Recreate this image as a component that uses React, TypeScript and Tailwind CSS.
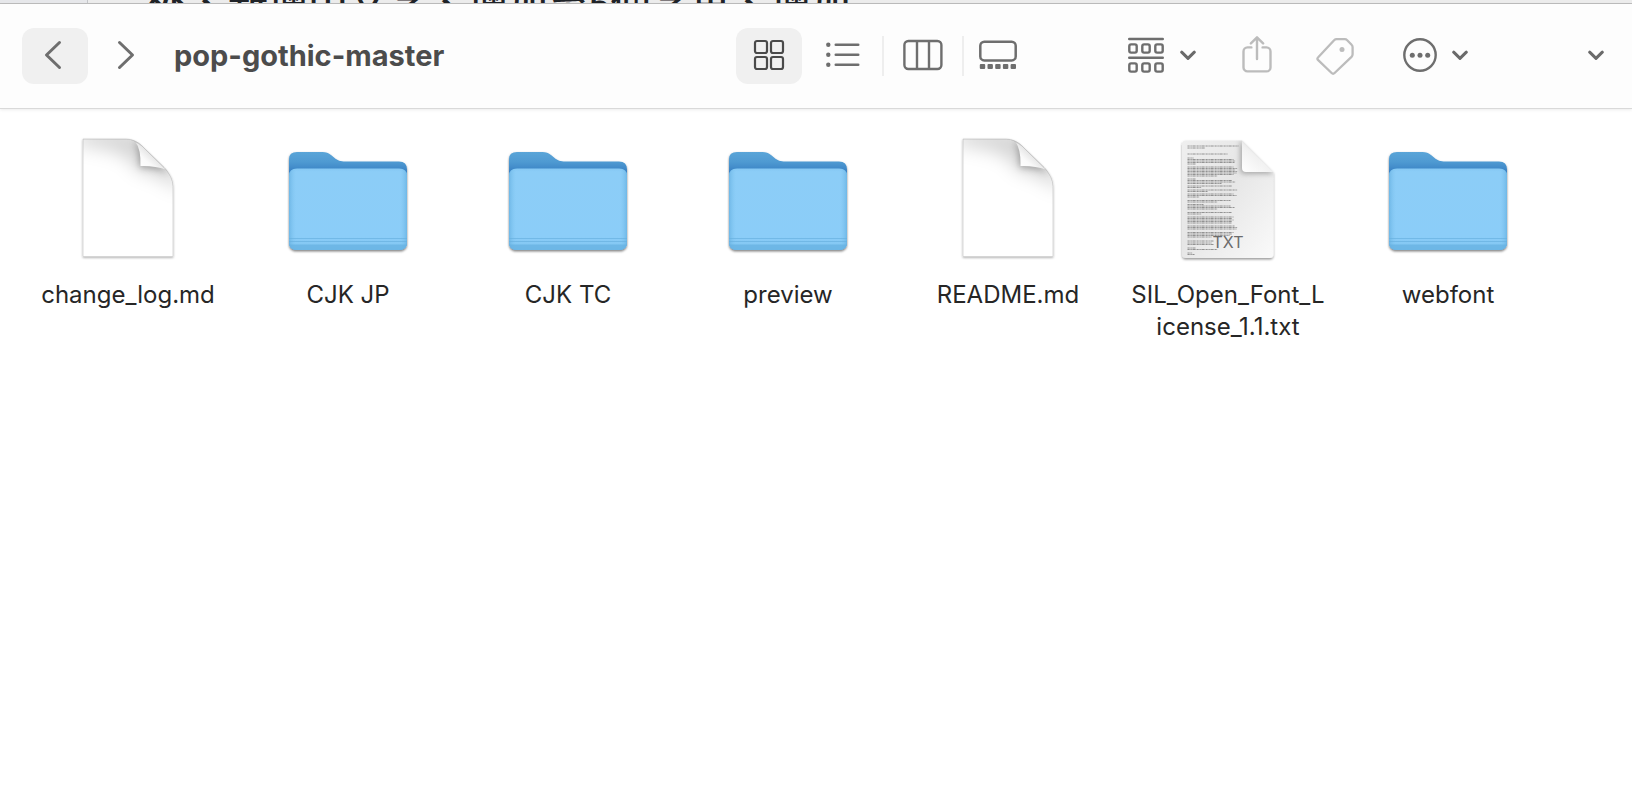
import React from "react";

type IconProps = { className?: string };

const ChevronLeft = () => (
  <svg width="18" height="30" viewBox="0 0 18 30" fill="none" stroke="#6e6e6e" strokeWidth="3" strokeLinecap="round" strokeLinejoin="round" aria-hidden="true">
    <path d="M15.5 2.5 2.500 15l13 12.500" />
  </svg>
);

const ChevronRight = () => (
  <svg width="18" height="30" viewBox="0 0 18 30" fill="none" stroke="#6e6e6e" strokeWidth="3" strokeLinecap="round" strokeLinejoin="round" aria-hidden="true">
    <path d="M2.5 2.5l13 12.5-13 12.5" />
  </svg>
);

const ChevronDown = ({ className }: IconProps) => (
  <svg className={className} width="16" height="12" viewBox="0 0 16 12" fill="none" stroke="#6a6a6a" strokeWidth="3" strokeLinecap="round" strokeLinejoin="round" aria-hidden="true">
    <path d="M1.7 3.2 8 9.300l6.300-6.100" />
  </svg>
);

const GridIcon = () => (
  <svg width="32" height="32" viewBox="0 0 32 32" fill="none" stroke="#4a4a4a" strokeWidth="2.2" aria-hidden="true">
    <rect x="2" y="2" width="12" height="12" rx="2" />
    <rect x="18" y="2" width="12" height="12" rx="2" />
    <rect x="2" y="18" width="12" height="12" rx="2" />
    <rect x="18" y="18" width="12" height="12" rx="2" />
  </svg>
);

const ListIcon = () => (
  <svg width="34" height="26" viewBox="0 0 34 26" fill="#6e6e6e" aria-hidden="true">
    <circle cx="2.3" cy="2.8" r="2.2" />
    <circle cx="2.3" cy="12.8" r="2.2" />
    <circle cx="2.3" cy="22.8" r="2.2" />
    <rect x="8.5" y="1.5" width="25" height="2.6" rx="1.3" />
    <rect x="8.5" y="11.5" width="25" height="2.6" rx="1.3" />
    <rect x="8.5" y="21.5" width="25" height="2.6" rx="1.3" />
  </svg>
);

const ColumnsIcon = () => (
  <svg width="40" height="32" viewBox="0 0 40 32" fill="none" stroke="#6e6e6e" strokeWidth="2.4" aria-hidden="true">
    <rect x="1.4" y="2" width="37" height="28" rx="4" />
    <path d="M14 2v28M26 2v28" />
  </svg>
);

const GalleryIcon = () => (
  <svg width="38" height="30" viewBox="0 0 38 30" aria-hidden="true">
    <rect x="1.3" y="1.8" width="35.4" height="18.6" rx="4" fill="none" stroke="#6e6e6e" strokeWidth="2.5" />
    <g fill="#6e6e6e">
      <rect x="0.8" y="24" width="5.4" height="5" rx="1" />
      <rect x="8.5" y="24" width="5.4" height="5" rx="1" />
      <rect x="16.2" y="24" width="5.4" height="5" rx="1" />
      <rect x="23.9" y="24" width="5.4" height="5" rx="1" />
      <rect x="31.6" y="24" width="5.4" height="5" rx="1" />
    </g>
  </svg>
);

const GroupIcon = () => (
  <svg width="36" height="36" viewBox="0 0 36 36" fill="none" stroke="#6e6e6e" strokeWidth="2.4" strokeLinecap="round" aria-hidden="true">
    <path d="M1.2 2h33.6M1.2 20.8h33.6" />
    <rect x="1.3" y="7.4" width="7.4" height="8.2" rx="1.8" />
    <rect x="14.3" y="7.4" width="7.4" height="8.2" rx="1.8" />
    <rect x="27.3" y="7.4" width="7.4" height="8.2" rx="1.8" />
    <rect x="1.3" y="26.4" width="7.4" height="8.2" rx="1.8" />
    <rect x="14.3" y="26.4" width="7.4" height="8.2" rx="1.8" />
    <rect x="27.3" y="26.4" width="7.4" height="8.2" rx="1.8" />
  </svg>
);

const ShareIcon = () => (
  <svg width="30" height="38" viewBox="0 0 30 38" fill="none" stroke="#bcbcbc" strokeWidth="2.4" strokeLinecap="round" strokeLinejoin="round" aria-hidden="true">
    <path d="M9.4 11.400H5.500a4 4 0 0 0-4 4v16a4 4 0 0 0 4 4h19a4 4 0 0 0 4-4v-16a4 4 0 0 0-4-4h-3.900" />
    <path d="M15 23V2M8.900 7.400 15 1.300l6.100 6.100" />
  </svg>
);

const TagIcon = () => (
  <svg width="38" height="38" viewBox="0 0 38 38" fill="none" stroke="#bcbcbc" strokeWidth="2.3" strokeLinejoin="round" aria-hidden="true">
    <path d="M20.6 2.2h8.2q1.4 0 2.4 1l4.4 4.6q1 1 1 2.4v7.1q0 1.5-1.1 2.6L18.6 36q-1.5 1.4-3 0L2.2 23.2q-1.5-1.5 0-3L18.1 3.3q1.1-1.1 2.5-1.1z" />
    <circle cx="26" cy="12.4" r="2.5" fill="#bcbcbc" stroke="none" />
  </svg>
);

const MoreIcon = () => (
  <svg width="34" height="34" viewBox="0 0 34 34" aria-hidden="true">
    <circle cx="17" cy="17" r="15.7" fill="none" stroke="#6e6e6e" strokeWidth="2.4" />
    <g fill="#6e6e6e">
      <circle cx="9.3" cy="17.2" r="2.5" />
      <circle cx="17" cy="17.2" r="2.5" />
      <circle cx="24.7" cy="17.2" r="2.5" />
    </g>
  </svg>
);

const FolderArt = ({ id }: { id: string }) => (
  <svg width="128" height="128" viewBox="0 0 128 128" aria-hidden="true">
    <defs>
      <linearGradient id={`${id}-back`} x1="0" y1="0" x2="0" y2="1">
        <stop offset="0" stopColor="#5ba5d8" />
        <stop offset="0.1" stopColor="#4f9ad2" />
        <stop offset="0.2" stopColor="#3a82c4" />
        <stop offset="1" stopColor="#3a82c4" />
      </linearGradient>
      <linearGradient id={`${id}-front`} x1="0" y1="0" x2="0" y2="1">
        <stop offset="0" stopColor="#84c7f3" />
        <stop offset="0.04" stopColor="#8ccdf7" />
        <stop offset="0.84" stopColor="#8bcdf8" />
        <stop offset="1" stopColor="#7fc4f0" />
      </linearGradient>
      <linearGradient id={`${id}-side`} x1="0" y1="0" x2="1" y2="0">
        <stop offset="0" stopColor="#5facde" stopOpacity="0.65" />
        <stop offset="0.06" stopColor="#7fc4ee" stopOpacity="0" />
        <stop offset="0.94" stopColor="#7fc4ee" stopOpacity="0" />
        <stop offset="1" stopColor="#5facde" stopOpacity="0.65" />
      </linearGradient>
      <filter id={`${id}-shadow`} x="-10%" y="-10%" width="120%" height="125%">
        <feDropShadow dx="0" dy="1.4" stdDeviation="1.2" floodColor="#000" floodOpacity="0.5" />
      </filter>
    </defs>
    <g filter={`url(#${id}-shadow)`}>
      <path d="M5 22q0-7 8-7h25.500q5 0 8.500 3l4.500 3.800q3.200 2.600 8 2.600H115q8 0 8 8V105q0 8-8 8H13q-8 0-8-8z" fill={`url(#${id}-back)`} />
      <path d="M5 39q0-7.500 8-7.500H115q8 0 8 7.500v66q0 8-8 8H13q-8 0-8-8z" fill={`url(#${id}-front)`} />
    </g>
    <path d="M5 39q0-7.500 8-7.500H115q8 0 8 7.500v66q0 8-8 8H13q-8 0-8-8z" fill={`url(#${id}-side)`} />
    <path d="M5 101.500h118M5 104.500h118" stroke="#68b1e0" strokeOpacity="0.7" strokeWidth="1" />
    <path d="M5.300 107.500h117.400Q121.500 113 115 113H13q-6.500 0-7.700-5.500z" fill="#67b2e2" fillOpacity="0.75" />
  </svg>
);

const BlankArt = ({ id }: { id: string }) => (
  <svg width="128" height="128" viewBox="0 0 128 128" aria-hidden="true">
    <defs>
      <linearGradient id={`${id}-curl`} x1="0" y1="1" x2="0.550" y2="0.450">
        <stop offset="0" stopColor="#ffffff" />
        <stop offset="0.6" stopColor="#fafafa" />
        <stop offset="1" stopColor="#e4e4e4" />
      </linearGradient>
      <filter id={`${id}-shadow`} x="-10%" y="-10%" width="120%" height="120%">
        <feDropShadow dx="0" dy="1" stdDeviation="0.9" floodColor="#000" floodOpacity="0.3" />
      </filter>
      <filter id={`${id}-wide`} x="-50%" y="-50%" width="200%" height="200%">
        <feGaussianBlur stdDeviation="9" />
      </filter>
      <filter id={`${id}-near`} x="-50%" y="-50%" width="200%" height="200%">
        <feGaussianBlur stdDeviation="3.5" />
      </filter>
      <clipPath id={`${id}-clip`}>
        <path d="M19 2h43q9 0 16 7l22 21.500q9 9 9 19V119.500H19z" />
      </clipPath>
    </defs>
    <path d="M19 2h43q9 0 16 7l22 21.500q9 9 9 19V119.500H19z" fill="#ffffff" stroke="#cfcfcf" strokeWidth="0.8" filter={`url(#${id}-shadow)`} />
    <g clipPath={`url(#${id}-clip)`}>
      <path d="M14-6h56l46 44v16Q94 36 74 34 66 12 14 8z" fill="#000000" fillOpacity="0.17" filter={`url(#${id}-wide)`} />
      <path d="M69 3q7 9 6.500 27.500 18-.5 30 6.500L78 8z" fill="#000000" fillOpacity="0.3" filter={`url(#${id}-near)`} />
    </g>
    <path d="M71.500 5Q77 12 76.500 29q14-.5 25.500 3.500L78 9Q75 6.500 71.500 5z" fill={`url(#${id}-curl)`} />
    <path d="M70 4.200q4.500 1.600 8 4.800l22 21.500q1.500 1.500 3 3.300" fill="none" stroke="#c4c4c4" strokeWidth="0.9" />
  </svg>
);

const previewLines: number[][] = [
  [6, 51], [8, 18], [14, 40], [18, 6], [19.500, 46], [21, 48], [22.500, 47], [24, 8],
  [27, 46], [28.500, 50], [30, 48], [31.500, 50], [33, 49], [34.500, 46], [36, 30],
  [39, 8], [40.500, 45], [42, 48], [43.500, 34], [46, 45], [47.500, 14], [50, 50], [51.500, 20],
  [54, 46], [55.500, 49], [57, 12], [60.500, 43], [62, 30], [64.500, 16], [66, 43], [67.500, 47], [69, 30],
  [72.500, 44], [74, 14], [77, 46], [78.500, 45], [80, 46], [81.500, 45], [83, 44],
  [86, 47], [87.500, 50], [89, 49], [92.500, 46], [94, 45], [95.500, 42], [97, 24],
  [101, 26], [103, 24], [104.500, 26], [108, 8], [109.500, 30], [113, 5], [114.500, 7],
];

const TextArt = ({ id }: { id: string }) => (
  <svg width="128" height="128" viewBox="0 0 128 128" aria-hidden="true">
    <defs>
      <linearGradient id={`${id}-page`} x1="0" y1="0" x2="1" y2="1">
        <stop offset="0" stopColor="#efefef" />
        <stop offset="0.45" stopColor="#e6e6e6" />
        <stop offset="1" stopColor="#fafafa" />
      </linearGradient>
      <linearGradient id={`${id}-fold`} x1="0" y1="1" x2="0.600" y2="0.300">
        <stop offset="0" stopColor="#ffffff" />
        <stop offset="0.7" stopColor="#f1f1f1" />
        <stop offset="1" stopColor="#dcdcdc" />
      </linearGradient>
      <filter id={`${id}-shadow`} x="-10%" y="-10%" width="120%" height="120%">
        <feDropShadow dx="0" dy="1.500" stdDeviation="1.200" floodColor="#000" floodOpacity="0.4" />
      </filter>
      <filter id={`${id}-soft`} x="-30%" y="-30%" width="160%" height="160%">
        <feGaussianBlur stdDeviation="2.500" />
      </filter>
      <clipPath id={`${id}-clip`}>
        <path d="M22 3.500h56L109.500 35V117q0 4-4 4H22q-4 0-4-4V7.500q0-4 4-4z" />
      </clipPath>
    </defs>
    <path d="M22 3.500h56L109.500 35V117q0 4-4 4H22q-4 0-4-4V7.500q0-4 4-4z" fill={`url(#${id}-page)`} filter={`url(#${id}-shadow)`} />
    <g stroke="#7c7c7c" strokeWidth="0.8">
      {previewLines.map(([y, w]) => (
        <path key={y} d={`M23.500 ${y + 3}h${w}`} strokeDasharray="2.200 0.700 1.400 0.600 3.300 0.800" />
      ))}
    </g>
    <g clipPath={`url(#${id}-clip)`}>
      <path d="M76 3v29q0 5 5 5h29z" fill="#8a8a8a" fillOpacity="0.65" filter={`url(#${id}-soft)`} />
    </g>
    <path d="M78 3.500 109.500 35H82q-4 0-4-4z" fill={`url(#${id}-fold)`} />
    <text x="64" y="111" textAnchor="middle" fontFamily="Inter, sans-serif" fontSize="16" fill="#6b6b6b">TXT</text>
  </svg>
);

type Kind = "folder" | "blank" | "text";

const entries: { name: string; kind: Kind }[] = [
  { name: "change_log.md", kind: "blank" },
  { name: "CJK JP", kind: "folder" },
  { name: "CJK TC", kind: "folder" },
  { name: "preview", kind: "folder" },
  { name: "README.md", kind: "blank" },
  { name: "SIL_Open_Font_License_1.1.txt", kind: "text" },
  { name: "webfont", kind: "folder" },
];

const art = { folder: FolderArt, blank: BlankArt, text: TextArt };

function Entry({ name, kind, id }: { name: string; kind: Kind; id: string }) {
  const Art = art[kind];
  return (
    <li className="w-[220px]">
      <a href="#" className="flex flex-col items-center gap-[14px]">
        <Art id={id} />
        <span className="w-[196px] text-center text-2xl leading-8 break-all">{name}</span>
      </a>
    </li>
  );
}

function ToolButton({ label, active, children }: { label: string; active?: boolean; children: React.ReactNode }) {
  return (
    <button
      type="button"
      aria-label={label}
      className={`flex h-14 w-[66px] shrink-0 items-center justify-center rounded-xl pb-0.5 ${active ? "bg-[#f0f0f0]" : ""}`}
    >
      {children}
    </button>
  );
}

export default function App() {
  return (
    <div className="min-h-screen bg-white font-['Inter','Noto_Sans_CJK_TC',sans-serif] text-[#262626]">
      <div className="flex h-1 items-center overflow-hidden border-b border-[#bdbdbd] bg-[#ececec]">
        <div className="h-1 w-[88px] shrink-0 border-r border-[#c4c6ca] bg-[#e6e7ea]" />
        <p lang="zh-Hant" className="pl-[60px] font-['Noto_Sans_CJK_TC',sans-serif] text-[40px] leading-10 font-medium whitespace-nowrap text-[#1f2328]">
          外、新增中文字、增加至5個字重、增加
        </p>
      </div>

      <header className="flex h-[105px] items-center justify-between border-b border-[#d9d9d9] bg-[#fdfdfd] pr-7 pl-[22px] shadow-[0_1px_3px_rgba(0,0,0,0.08)]">
        <div className="flex items-center">
          <ToolButton label="Back" active>
            <span className="pr-1"><ChevronLeft /></span>
          </ToolButton>
          <button type="button" aria-label="Forward" className="flex h-14 w-[76px] items-center justify-center pb-0.5">
            <ChevronRight />
          </button>
          <h1 className="pl-[10px] text-[29px] leading-9 font-bold text-[#4c4c4c]">pop-gothic-master</h1>
        </div>

        <div className="flex items-center">
          <div className="flex items-center">
            <ToolButton label="Icons" active><GridIcon /></ToolButton>
            <div className="w-2" />
            <ToolButton label="List"><ListIcon /></ToolButton>
            <div className="mx-[6px] h-10 w-0.5 bg-[#eeeeee]" />
            <ToolButton label="Columns"><ColumnsIcon /></ToolButton>
            <div className="mr-[1px] ml-[6px] h-10 w-0.5 bg-[#eeeeee]" />
            <ToolButton label="Gallery"><GalleryIcon /></ToolButton>
          </div>
          <button type="button" aria-label="Group" className="ml-[97px] flex h-14 items-center gap-4 pb-0.5">
            <GroupIcon /><ChevronDown />
          </button>
          <button type="button" aria-label="Share" className="ml-[46px] flex h-14 items-center pb-0.5"><ShareIcon /></button>
          <button type="button" aria-label="Tags" className="ml-11 flex h-14 items-center"><TagIcon /></button>
          <button type="button" aria-label="More actions" className="ml-[49px] flex h-14 items-center gap-[15px] pb-0.5">
            <MoreIcon /><ChevronDown />
          </button>
          <button type="button" aria-label="More toolbar items" className="ml-[120px] flex h-14 items-center pb-0.5"><ChevronDown /></button>
        </div>
      </header>

      <main className="pt-7 pl-[18px]">
        <ul className="flex flex-wrap gap-y-8">
          {entries.map((e, i) => (
            <Entry key={e.name} name={e.name} kind={e.kind} id={`entry-${i}`} />
          ))}
        </ul>
      </main>
    </div>
  );
}
